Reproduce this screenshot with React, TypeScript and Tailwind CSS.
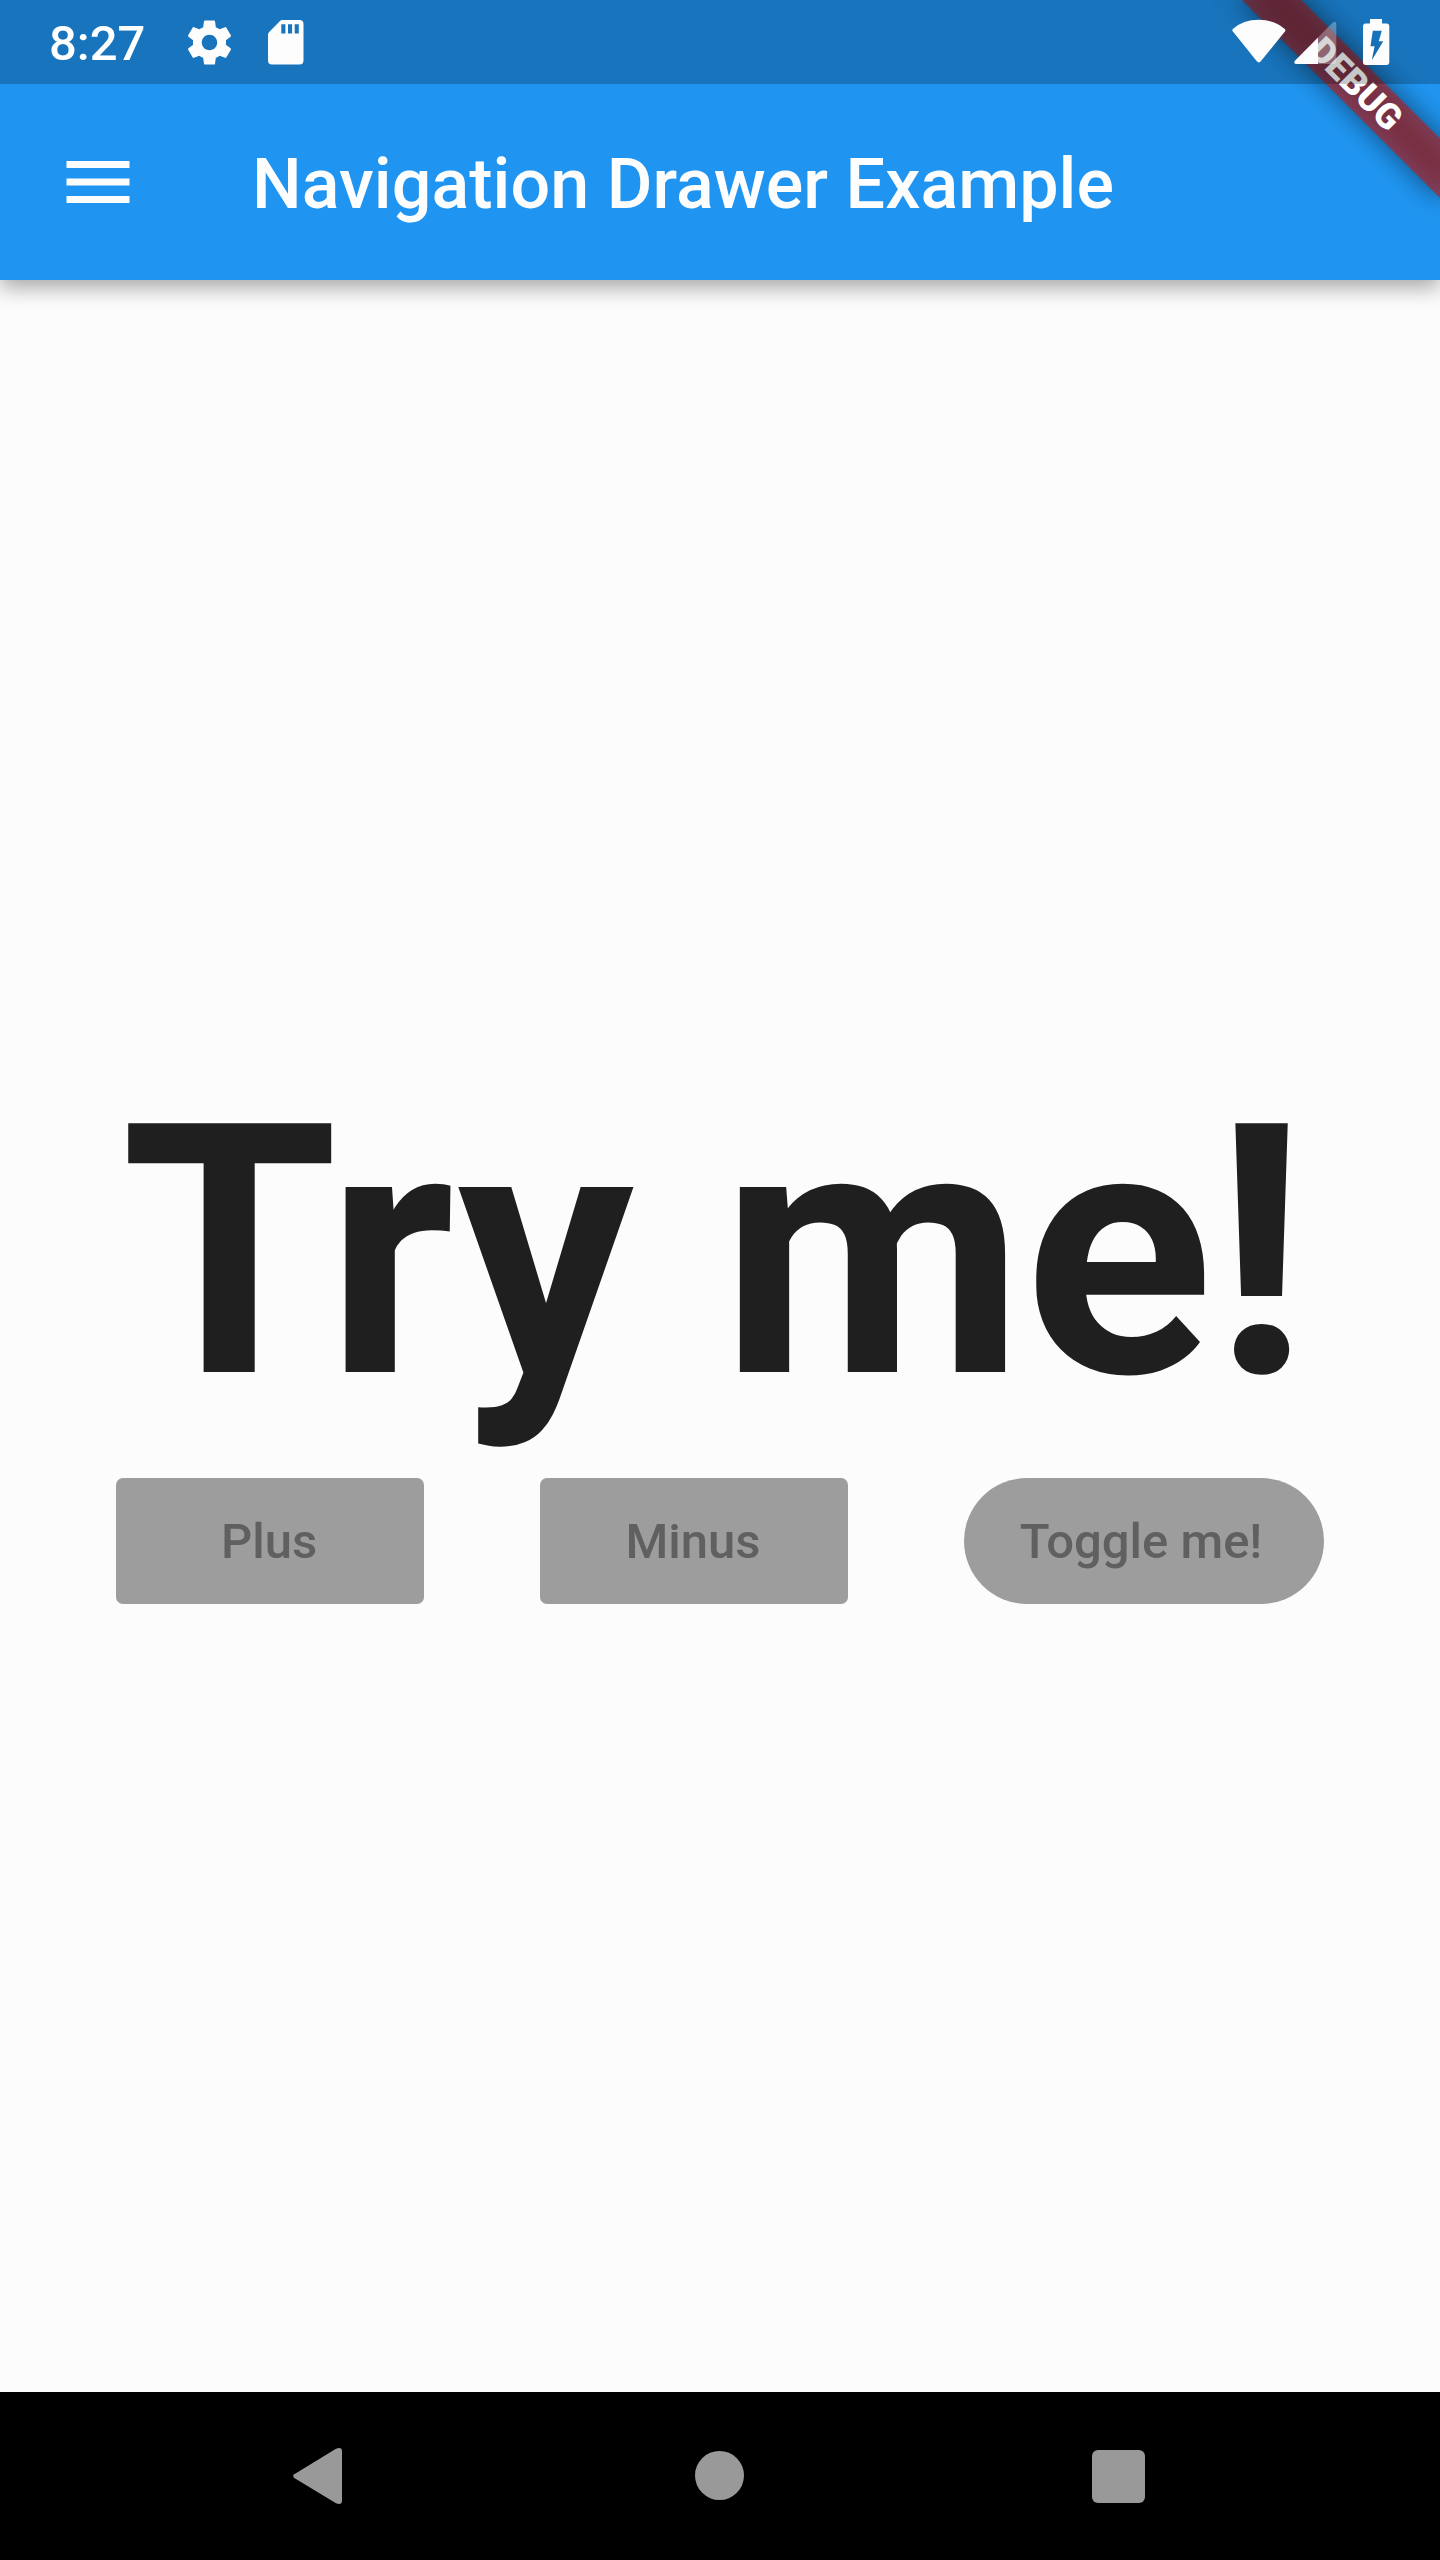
import React from "react";

function StatusBar() {
  return (
    <div className="absolute inset-x-0 top-0 z-20 flex h-[84px] items-start bg-black/22 text-white">
      <span className="ml-[49px] mt-[15px] text-[49px] font-medium leading-[58px] w-[134px]">8:27</span>
      <svg viewBox="0 0 24 24" className="mt-[16px] h-[53px] w-[53px] shrink-0 fill-[#fdfdfe]">
        <path d="M19.43 12.98c.04-.32.07-.64.07-.98s-.03-.66-.07-.98l2.11-1.65c.19-.15.24-.42.12-.64l-2-3.46c-.12-.22-.39-.3-.61-.22l-2.49 1c-.52-.4-1.08-.73-1.69-.98l-.38-2.65C14.46 2.18 14.25 2 14 2h-4c-.25 0-.46.18-.49.42l-.38 2.65c-.61.25-1.17.59-1.69.98l-2.49-1c-.23-.09-.49 0-.61.22l-2 3.46c-.13.22-.07.49.12.64l2.11 1.65c-.04.32-.07.65-.07.98s.03.66.07.98l-2.11 1.65c-.19.15-.24.42-.12.64l2 3.46c.12.22.39.3.61.22l2.49-1c.52.4 1.08.73 1.69.98l.38 2.65c.03.24.24.42.49.42h4c.25 0 .46-.18.49-.42l.38-2.65c.61-.25 1.17-.59 1.69-.98l2.49 1c.23.09.49 0 .61-.22l2-3.46c.12-.22.07-.49-.12-.64l-2.11-1.65zM12 15.5c-1.93 0-3.5-1.57-3.5-3.5s1.57-3.5 3.5-3.5 3.5 1.57 3.5 3.5-1.57 3.5-3.5 3.5z" />
      </svg>
      <svg viewBox="0 0 36 45" className="ml-[32px] mt-[20px] h-[45px] w-[36px] shrink-0 fill-[#fdfdfe]">
        <path
          fillRule="evenodd"
          d="M14 0H31.5Q35.5 0 35.5 4V40.5Q35.5 44.4 31.5 44.4H4Q0 44.4 0 40.5V15Q0 13 1.2 12L12 1Q13 0 14 0ZM13.3 4.2V13.4H17.4V4.2ZM20 4.2V13.4H24.1V4.2ZM26.7 4.2V13.4H30.8V4.2Z"
        />
      </svg>
      <div className="ml-auto mr-[50px] mt-[19px] flex items-start">
        <svg viewBox="0 0 54 46" className="h-[46px] w-[54px] fill-[#fdfdfe]">
          <path d="M.8 10Q-.2 11.4.9 12.6L24.6 42Q26.8 44.8 29 42L52.9 12.6Q54 11.2 52.8 10Q42.5.8 26.8.8T.8 10Z" />
        </svg>
        <svg viewBox="0 0 43 46" className="ml-[8px] h-[46px] w-[43px] fill-[#fdfdfe]">
          <path className="opacity-30" d="M24 18.5L38.2 3.9Q42.3 1 42.3 5V42.5Q42.3 45 39.5 45H24Z" />
          <path d="M24 18.5L.9 41.7Q-1 45 3 45H24Z" />
        </svg>
        <svg viewBox="0 0 27 46" className="ml-[26px] h-[46px] w-[27px] fill-[#fdfdfe]">
          <path
            fillRule="evenodd"
            d="M7 0H19V4.5H23.5Q26.3 4.5 26.3 7.5V43Q26.3 46 23.5 46H2.8Q0 46 0 43V7.5Q0 4.5 2.8 4.5H7ZM9.8 11.8L7.5 27.2H11.6L8.8 41.3L20.3 22.2H15.8L18.8 11.8Z"
          />
        </svg>
      </div>
    </div>
  );
}

function DebugBanner() {
  return (
    <div className="pointer-events-none absolute right-0 top-0 z-10 h-0 w-0 rotate-45">
      <div className="absolute -left-[140px] top-[98px] h-[42px] w-[280px] bg-black/50 blur-[14px]" />
      <div className="absolute -left-[140px] top-[98px] flex h-[42px] w-[280px] items-center justify-center bg-[#b71c1c]/63 text-[35.7px] font-black leading-[36px] text-white">
        DEBUG
      </div>
    </div>
  );
}

function AppBar() {
  return (
    <header className="relative z-[1] flex h-[280px] shrink-0 items-center bg-[#1f95f1] pt-[84px] shadow-[0_8px_20px_rgba(0,0,0,0.33)]">
      <button aria-label="Open navigation menu" className="ml-[56px] h-[84px] w-[84px]">
        <svg viewBox="0 0 24 24" className="h-[84px] w-[84px] fill-[#fdfdfe]">
          <path d="M3 18h18v-2H3v2zm0-5h18v-2H3v2zm0-7v2h18V6H3z" />
        </svg>
      </button>
      <h1 className="ml-[112px] whitespace-nowrap pt-1 text-[70px] font-medium leading-[82px] tracking-[0.05px] text-[#fdfdfe]">
        Navigation Drawer Example
      </h1>
    </header>
  );
}

const buttonBase =
  "flex h-[126px] items-center justify-center whitespace-nowrap bg-[#9d9d9d] pt-[2px] text-[49px] font-medium leading-[58px] text-[#606060]";

export default function App() {
  return (
    <div className="relative flex h-[2560px] w-[1440px] flex-col overflow-hidden bg-[#fcfcfd] font-['Roboto',sans-serif]">
      <StatusBar />
      <DebugBanner />
      <AppBar />
      <main className="flex flex-1 flex-col items-center justify-center">
        <div className="mr-[11px] h-[410px] whitespace-nowrap text-[350px] font-bold leading-[368px] text-[#1f1f20]">
          Try me!
        </div>
        <div className="flex w-full justify-evenly">
          <button className={`${buttonBase} w-[308px] rounded-[7px] pr-[2px]`}>Plus</button>
          <button className={`${buttonBase} w-[308px] rounded-[7px] pr-[2px]`}>Minus</button>
          <button className={`${buttonBase} w-[360px] rounded-full pr-[6px]`}>Toggle me!</button>
        </div>
      </main>
      <nav className="flex h-[168px] shrink-0 items-center bg-black pl-[293px]">
        <svg viewBox="0 0 49 56" className="h-[56px] w-[49px] fill-[#999999]">
          <path d="M1.3 26.2Q-1 28 1.3 30L43 55.2Q49 57.5 49 52.5V3.5Q49-1.5 43 .8Z" />
        </svg>
        <div className="ml-[353px] mt-[-1px] h-[49px] w-[49px] rounded-full bg-[#999999]" />
        <div className="ml-[348px] h-[53px] w-[53px] rounded-[6px] bg-[#999999]" />
      </nav>
    </div>
  );
}
